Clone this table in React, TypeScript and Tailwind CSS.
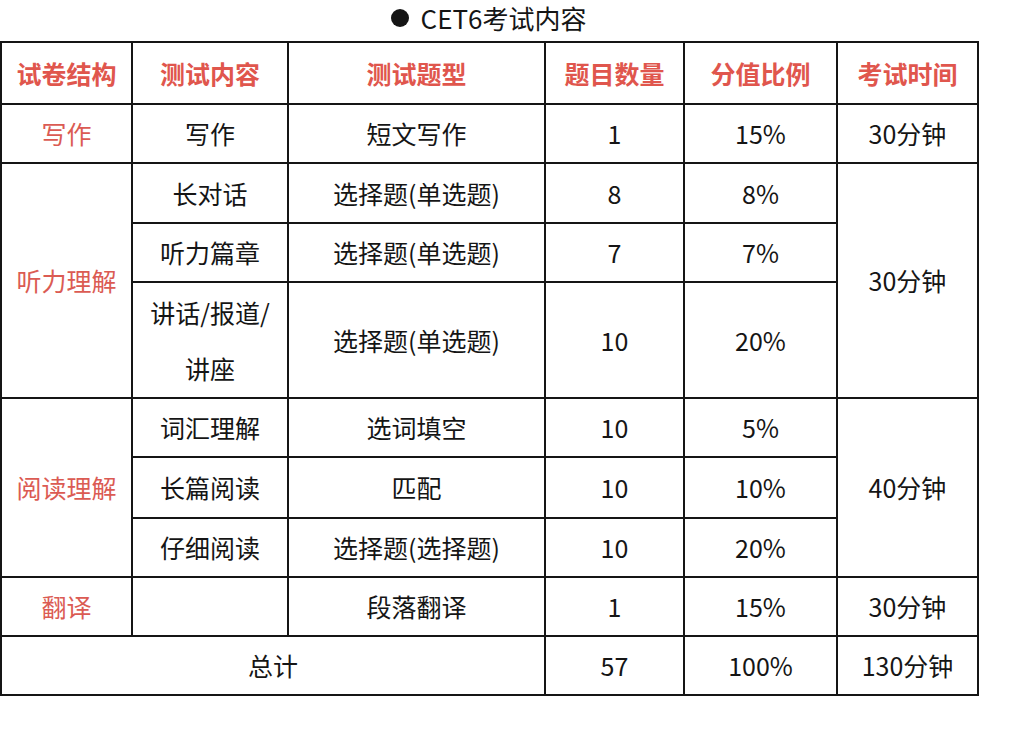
const headers = ['试卷结构', '测试内容', '测试题型', '题目数量', '分值比例', '考试时间'];

const cell = 'border-2 border-[#151515] text-center align-middle p-0';
const red = 'text-[#db5b53]';

export default function App() {
  return (
    <div className="w-[1036px] h-[750px] bg-white text-[#151515] font-['Noto_Sans_CJK_SC','Noto_Sans',sans-serif]">
      <div className="w-[977px] h-[42px] pb-[6px] flex items-center justify-center gap-[12px] text-[26px] leading-none">
        <span className="w-[18px] h-[18px] rounded-full bg-[#151515]" />
        <span>CET6考试内容</span>
      </div>
      <table className="border-collapse table-fixed w-[977px] text-[25px] leading-none -mt-px">
        <colgroup>
          <col className="w-[131px]" />
          <col className="w-[156px]" />
          <col className="w-[257px]" />
          <col className="w-[139px]" />
          <col className="w-[153px]" />
          <col className="w-[141px]" />
        </colgroup>
        <thead>
          <tr className="h-[62px]">
            {headers.map(h => (
              <th key={h} className={`${cell} font-bold text-[#e0564d]`}>{h}</th>
            ))}
          </tr>
        </thead>
        <tbody>
          <tr className="h-[59px]">
            <td className={`${cell} ${red}`}>写作</td>
            <td className={cell}>写作</td>
            <td className={cell}>短文写作</td>
            <td className={cell}>1</td>
            <td className={cell}>15%</td>
            <td className={cell}>30分钟</td>
          </tr>
          <tr className="h-[60px]">
            <td rowSpan={3} className={`${cell} ${red}`}>听力理解</td>
            <td className={cell}>长对话</td>
            <td className={cell}>选择题(单选题)</td>
            <td className={cell}>8</td>
            <td className={cell}>8%</td>
            <td rowSpan={3} className={cell}>30分钟</td>
          </tr>
          <tr className="h-[59px]">
            <td className={cell}>听力篇章</td>
            <td className={cell}>选择题(单选题)</td>
            <td className={cell}>7</td>
            <td className={cell}>7%</td>
          </tr>
          <tr className="h-[116px]">
            <td className={`${cell} leading-[56px]`}>讲话/报道/<br />讲座</td>
            <td className={cell}>选择题(单选题)</td>
            <td className={cell}>10</td>
            <td className={cell}>20%</td>
          </tr>
          <tr className="h-[59px]">
            <td rowSpan={3} className={`${cell} ${red}`}>阅读理解</td>
            <td className={cell}>词汇理解</td>
            <td className={cell}>选词填空</td>
            <td className={cell}>10</td>
            <td className={cell}>5%</td>
            <td rowSpan={3} className={cell}>40分钟</td>
          </tr>
          <tr className="h-[61px]">
            <td className={cell}>长篇阅读</td>
            <td className={cell}>匹配</td>
            <td className={cell}>10</td>
            <td className={cell}>10%</td>
          </tr>
          <tr className="h-[59px]">
            <td className={cell}>仔细阅读</td>
            <td className={cell}>选择题(选择题)</td>
            <td className={cell}>10</td>
            <td className={cell}>20%</td>
          </tr>
          <tr className="h-[59px]">
            <td className={`${cell} ${red}`}>翻译</td>
            <td className={cell}></td>
            <td className={cell}>段落翻译</td>
            <td className={cell}>1</td>
            <td className={cell}>15%</td>
            <td className={cell}>30分钟</td>
          </tr>
          <tr className="h-[59px]">
            <td colSpan={3} className={cell}>总计</td>
            <td className={cell}>57</td>
            <td className={cell}>100%</td>
            <td className={cell}>130分钟</td>
          </tr>
        </tbody>
      </table>
    </div>
  );
}
